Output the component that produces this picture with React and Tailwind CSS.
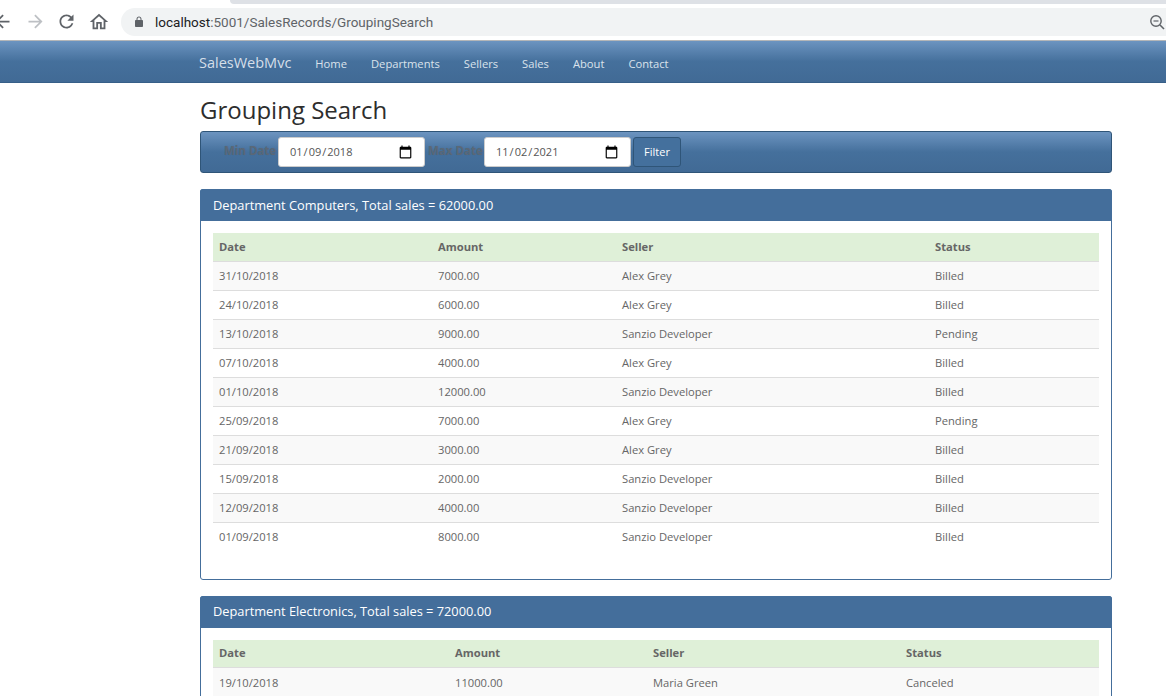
import React from "react";

const NAV_LINKS = ["Home", "Departments", "Sellers", "Sales", "About", "Contact"];

const COMPUTERS = [
  ["31/10/2018", "7000.00", "Alex Grey", "Billed"],
  ["24/10/2018", "6000.00", "Alex Grey", "Billed"],
  ["13/10/2018", "9000.00", "Sanzio Developer", "Pending"],
  ["07/10/2018", "4000.00", "Alex Grey", "Billed"],
  ["01/10/2018", "12000.00", "Sanzio Developer", "Billed"],
  ["25/09/2018", "7000.00", "Alex Grey", "Pending"],
  ["21/09/2018", "3000.00", "Alex Grey", "Billed"],
  ["15/09/2018", "2000.00", "Sanzio Developer", "Billed"],
  ["12/09/2018", "4000.00", "Sanzio Developer", "Billed"],
  ["01/09/2018", "8000.00", "Sanzio Developer", "Billed"],
];

const ELECTRONICS = [["19/10/2018", "11000.00", "Maria Green", "Canceled"]];

// material style browser toolbar icons
function Icon({ d, className }) {
  return (
    <svg viewBox="0 0 24 24" fill="currentColor" className={`shrink-0 ${className}`}>
      <path d={d} />
    </svg>
  );
}

const ICONS = {
  back: "M20 11H7.83l5.59-5.59L12 4l-8 8 8 8 1.41-1.41L7.83 13H20v-2z",
  forward: "M12 4l-1.41 1.41L16.17 11H4v2h12.17l-5.58 5.59L12 20l8-8z",
  reload:
    "M17.65 6.35C16.2 4.9 14.21 4 12 4c-4.42 0-7.99 3.58-7.99 8s3.57 8 7.99 8c3.73 0 6.84-2.55 7.73-6h-2.08c-.82 2.33-3.04 4-5.65 4-3.31 0-6-2.69-6-6s2.69-6 6-6c1.66 0 3.14.69 4.22 1.78L13 11h7V4l-2.35 2.35z",
  home: "M12 5.69l5 4.5V18h-2v-6H9v6H7v-7.81l5-4.5M12 3L2 12h3v8h6v-6h2v6h6v-8h3L12 3z",
  lock:
    "M18 8h-1V6c0-2.76-2.24-5-5-5S7 3.24 7 6v2H6c-1.1 0-2 .9-2 2v10c0 1.1.9 2 2 2h12c1.1 0 2-.9 2-2V10c0-1.1-.9-2-2-2zM9 6c0-1.66 1.34-3 3-3s3 1.34 3 3v2H9V6z",
};

function BrowserBar() {
  return (
    <div className="h-[41px] bg-white border-b border-[#b4b6b8] relative flex items-center shrink-0">
      {/* tab strip edge */}
      <div className="absolute top-0 left-[230px] right-0 h-1 bg-[#dee1e6] rounded-bl-lg" />
      <Icon d={ICONS.back} className="w-[21px] h-[21px] text-[#5f6368] ml-[-8px] mt-[3px]" />
      <Icon d={ICONS.forward} className="w-[21px] h-[21px] text-[#bdc0c4] ml-[12px] mt-[3px]" />
      <Icon d={ICONS.reload} className="w-[21px] h-[21px] text-[#5f6368] ml-[10px] mt-[3px]" />
      <Icon d={ICONS.home} className="w-[22px] h-[22px] text-[#5f6368] ml-[11px] mt-[3px]" />
      <div className="ml-[11px] mt-[3px] flex-1 h-7 bg-[#f1f3f4] rounded-l-full flex items-center">
        <Icon d={ICONS.lock} className="w-3 h-3 ml-3 text-[#5f6368]" />
        <span className="ml-[10px] mt-[2px] text-[13.5px] text-[#5f6368] font-['Roboto',sans-serif]">
          <span className="text-[#202124]">localhost</span>:5001/SalesRecords/GroupingSearch
        </span>
        <svg viewBox="0 0 16 16" fill="none" stroke="currentColor" className="w-4 h-4 ml-auto mr-[1px] text-[#5f6368] shrink-0">
          <circle cx="7" cy="7" r="5.2" strokeWidth="1.4" />
          <path d="M4.5 7h5" strokeWidth="1.2" />
          <path d="M11 11l4 4" strokeWidth="1.6" />
        </svg>
      </div>
    </div>
  );
}

function Navbar() {
  return (
    <div className="h-[42px] border-b border-[#375f88] bg-gradient-to-b from-[#6c94c0] via-[#45709c] to-[#416a95] shrink-0 pl-[199px] flex items-center">
      <span className="text-[14.5px] text-[#d5dfe9] mr-6 mt-[2px]">SalesWebMvc</span>
      <div className="flex gap-6 mt-[6px]">
        {NAV_LINKS.map((link) => (
          <a key={link} className="text-[11.2px] text-[#dbe3ec]">{link}</a>
        ))}
      </div>
    </div>
  );
}

function DateField({ value }) {
  return (
    <input
      type="date"
      defaultValue={value}
      className="w-[147px] h-[30px] bg-white rounded-[3px] border border-[#ccc] pl-[10px] pr-[11px] text-[11px] text-[#555] [&::-webkit-calendar-picker-indicator]:w-[15px] [&::-webkit-calendar-picker-indicator]:h-[15px] [&::-webkit-calendar-picker-indicator]:m-0 [&::-webkit-calendar-picker-indicator]:p-0"
    />
  );
}

function FilterBar() {
  return (
    <div className="h-[42px] border border-[#2f5578] rounded-[3px] bg-gradient-to-b from-[#6c94c0] via-[#45709c] to-[#416a95] flex items-center pl-[23px]">
      <span className="text-[11.5px] font-bold text-[#5a6877] -mt-[3px] w-[54px] [text-shadow:0_0_1px_rgba(0,0,0,0.12)]">Min Date</span>
      <DateField value="2018-01-09" />
      <span className="text-[11.5px] font-bold text-[#5a6877] -mt-[3px] w-[59px] pl-[3px] [text-shadow:0_0_1px_rgba(0,0,0,0.12)]">Max Date</span>
      <DateField value="2021-11-02" />
      <button className="ml-[2px] h-[30px] w-[48px] rounded-[3px] border border-[#2f5578] bg-[#44709d] text-[11px] text-white">
        Filter
      </button>
    </div>
  );
}

function DepartmentPanel({ title, rows, widths, className }) {
  return (
    <div className={`border border-[#446e9b] rounded-[3px] ${className}`}>
      <div className="h-[31px] bg-[#446e9b] text-white text-[12.8px] pl-[13px] flex items-center -mx-px -mt-px rounded-t-[3px] box-content border-t border-[#446e9b]">
        {title}
      </div>
      <div className="p-3">
        <table className="w-[886px] table-fixed border-collapse text-[11.2px] text-[#666] mb-[15px]">
          <colgroup>
            {widths.map((w, i) => (
              <col key={i} style={{ width: w }} />
            ))}
          </colgroup>
          <thead>
            <tr className="bg-[#dff0d8] h-[28px] border-b border-[#ddd]">
              {["Date", "Amount", "Seller", "Status"].map((h) => (
                <th key={h} className="text-left font-bold px-[6px] pt-[1px]">{h}</th>
              ))}
            </tr>
          </thead>
          <tbody>
            {rows.map((row, i) => (
              <tr key={i} className={`h-[29px] border-b border-[#ddd] ${i % 2 === 0 ? "bg-[#f9f9f9]" : "bg-white last:border-white"}`}>
                {row.map((cell, j) => (
                  <td key={j} className="px-[6px] pt-[2px]">{cell}</td>
                ))}
              </tr>
            ))}
          </tbody>
        </table>
      </div>
    </div>
  );
}

export default function App() {
  return (
    <div className="w-[1166px] h-[696px] overflow-hidden bg-white flex flex-col font-['Open_Sans',sans-serif]">
      <BrowserBar />
      <Navbar />
      <div className="ml-[200px] w-[912px]">
        <h2 className="text-[24px] leading-[26px] text-[#2d2d2d] mt-[14px] mb-[8px]">Grouping Search</h2>
        <FilterBar />
        <DepartmentPanel
          title="Department Computers, Total sales = 62000.00"
          rows={COMPUTERS}
          widths={[219, 184, 313, 170]}
          className="mt-4"
        />
        <DepartmentPanel
          title="Department Electronics, Total sales = 72000.00"
          rows={ELECTRONICS}
          widths={[236, 198, 253, 199]}
          className="mt-4"
        />
      </div>
    </div>
  );
}
